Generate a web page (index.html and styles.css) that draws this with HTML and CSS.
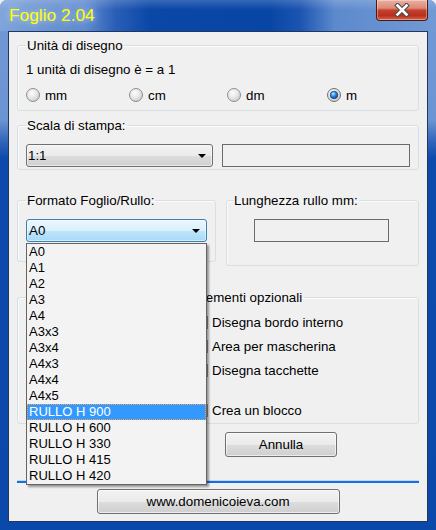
FILE: index.html
```html
<!DOCTYPE html>
<html lang="it">
<head>
<meta charset="utf-8">
<title>Foglio 2.04</title>
<link rel="stylesheet" href="styles.css">
</head>
<body>
<svg class="defs" width="0" height="0" aria-hidden="true">
  <defs>
    <radialGradient id="rbFill" cx="40%" cy="35%" r="70%">
      <stop offset="0" stop-color="#fdfdfd"/>
      <stop offset="0.55" stop-color="#e6e6e6"/>
      <stop offset="1" stop-color="#c9c9c9"/>
    </radialGradient>
    <radialGradient id="rbDot" cx="40%" cy="35%" r="70%">
      <stop offset="0" stop-color="#c6ecff"/>
      <stop offset="0.45" stop-color="#2b8be6"/>
      <stop offset="1" stop-color="#083f8c"/>
    </radialGradient>
  </defs>
</svg>
<div class="window">
  <div class="titlebar">
    <span class="title">Foglio 2.04</span>
    <div class="close">
      <svg width="16" height="14" viewBox="0 0 16 14">
        <path d="M3.5 2.5 L12.5 11.5 M12.5 2.5 L3.5 11.5" stroke="#4a4a4a" stroke-width="4.6" stroke-linecap="square" fill="none"/>
        <path d="M3.5 2.5 L12.5 11.5 M12.5 2.5 L3.5 11.5" stroke="#ffffff" stroke-width="2.6" stroke-linecap="square" fill="none"/>
      </svg>
    </div>
  </div>
  <div class="client">
    <fieldset class="group g-units">
      <legend>Unità di disegno</legend>
      <div class="line">1 unità di disegno è = a 1</div>
      <div class="radios">
        <label class="radio"><svg width="14" height="14" viewBox="0 0 14 14"><circle cx="7" cy="7" r="6.5" fill="url(#rbFill)" stroke="#8e8f8f"/></svg><span>mm</span></label>
        <label class="radio"><svg width="14" height="14" viewBox="0 0 14 14"><circle cx="7" cy="7" r="6.5" fill="url(#rbFill)" stroke="#8e8f8f"/></svg><span>cm</span></label>
        <label class="radio"><svg width="14" height="14" viewBox="0 0 14 14"><circle cx="7" cy="7" r="6.5" fill="url(#rbFill)" stroke="#8e8f8f"/></svg><span>dm</span></label>
        <label class="radio"><svg width="14" height="14" viewBox="0 0 14 14"><circle cx="7" cy="7" r="6.5" fill="url(#rbFill)" stroke="#6f7070"/><circle cx="7" cy="7" r="3.8" fill="url(#rbDot)" stroke="#173f73" stroke-width="0.7"/></svg><span>m</span></label>
      </div>
    </fieldset>

    <fieldset class="group g-scale">
      <legend>Scala di stampa:</legend>
      <div class="row">
        <div class="combo combo-gray"><span class="combo-text">1:1</span><i class="arrow"></i></div>
        <div class="textbox"></div>
      </div>
    </fieldset>

    <div class="pair">
      <fieldset class="group g-format">
        <legend>Formato Foglio/Rullo:</legend>
        <div class="combo-wrap">
          <div class="combo combo-blue"><span class="combo-text">A0</span><i class="arrow"></i></div>
          <ul class="droplist">
            <li>A0</li>
            <li>A1</li>
            <li>A2</li>
            <li>A3</li>
            <li>A4</li>
            <li>A3x3</li>
            <li>A3x4</li>
            <li>A4x3</li>
            <li>A4x4</li>
            <li>A4x5</li>
            <li class="selected">RULLO H 900</li>
            <li>RULLO H 600</li>
            <li>RULLO H 330</li>
            <li>RULLO H 415</li>
            <li>RULLO H 420</li>
          </ul>
        </div>
      </fieldset>
      <fieldset class="group g-length">
        <legend>Lunghezza rullo mm:</legend>
        <div class="textbox tb-length"></div>
      </fieldset>
    </div>

    <fieldset class="group g-options">
      <legend>Elementi opzionali</legend>
      <div class="check"><span class="box"></span><span>Disegna bordo interno</span></div>
      <div class="check"><span class="box"></span><span>Area per mascherina</span></div>
      <div class="check"><span class="box"></span><span>Disegna tacchette</span></div>
      <div class="check check-last"><span class="box"></span><span>Crea un blocco</span></div>
    </fieldset>

    <div class="actions"><button class="btn btn-cancel">Annulla</button></div>
    <div class="progress"></div>
    <div class="footer"><button class="btn btn-site">www.domenicoieva.com</button></div>
  </div>
</div>
</body>
</html>
```

FILE: styles.css
```css
* { box-sizing: border-box; }

html, body {
  margin: 0;
  padding: 0;
}

body {
  width: 436px;
  height: 530px;
  overflow: hidden;
  background: #eef2f6;
  font-family: "Liberation Sans", Arial, sans-serif;
  font-size: 13.33px;
  line-height: 15px;
  color: #000;
}

.defs {
  display: block;
  width: 0;
  height: 0;
  overflow: hidden;
}

.window {
  width: 436px;
  height: 530px;
  display: flex;
  flex-direction: column;
  border-radius: 7px 7px 0 0;
  overflow: hidden;
  background: linear-gradient(to bottom, #7199d5 0px, #6b94d2 120px, #3a6bbd 138px, #0c4bab 158px, #0a49aa 100%);
}

.titlebar {
  height: 31px;
  flex: none;
  display: flex;
  justify-content: space-between;
  align-items: flex-start;
  background:
    linear-gradient(to bottom, rgba(255,255,255,0.18) 0px, rgba(255,255,255,0) 10px),
    linear-gradient(to right, #80a5db 0px, #6f97d3 35px, #5f8bcf 85px, #2b5fb7 115px, #0a47a6 150px, #0846a6 270px, #1c54b0 300px, #5d8acd 335px, #7199d5 436px);
}

.title {
  padding: 5px 0 0 9px;
  font-size: 17.33px;
  line-height: 20px;
  color: #ffff00;
  text-shadow: 0 0 6px rgba(210, 230, 255, 0.75), 0 0 14px rgba(210, 230, 255, 0.45);
}

.close {
  width: 52px;
  height: 21px;
  margin-right: 8px;
  display: flex;
  align-items: center;
  justify-content: center;
  border: 1px solid #4d1a12;
  border-top: none;
  border-radius: 0 0 4px 4px;
  background: linear-gradient(to bottom, #eab0a2 0%, #dc8a75 40%, #c3402c 52%, #b9301d 78%, #d76646 100%);
  box-shadow: inset 0 0 0 1px rgba(255, 255, 255, 0.35);
}

.client {
  flex: 1;
  margin: 0 8px 8px;
  padding: 0 8px;
  background: #f0f0f0;
  border: 1px solid #21375f;
  display: flex;
  flex-direction: column;
}

/* group boxes */
.group {
  margin: 0;
  min-width: 0;
  border: 1px solid #d5dfe5;
  border-radius: 3px;
  padding: 9px 8px 7px;
  box-shadow: inset 1px 1px 0 #fbfbfb;
}

.group legend {
  padding: 0 1px;
  line-height: 15px;
}

.g-units { margin-top: 6px; }

.line { height: 15px; }

.radios {
  margin-top: 10px;
  height: 16px;
  display: grid;
  grid-template-columns: 103px 98px 100px auto;
}

.radio {
  display: flex;
  align-items: center;
  gap: 5px;
}

.radio svg { display: block; flex: none; }

.g-scale {
  margin-top: 7px;
  padding: 11px 8px 2px;
}

.row {
  display: flex;
  gap: 9px;
}

.combo {
  height: 23px;
  border-radius: 3px;
  display: flex;
  align-items: center;
  justify-content: space-between;
  padding: 0 6px 0 2px;
}

.combo-gray {
  width: 187px;
  padding-left: 1px;
  border: 1px solid #707070;
  background: linear-gradient(to bottom, #f2f2f2 0%, #ebebeb 50%, #dddddd 51%, #cfcfcf 100%);
  box-shadow: inset 0 0 0 1px rgba(255, 255, 255, 0.55);
}

.combo-blue {
  width: 181px;
  border: 1px solid #3c7fb1;
  background: linear-gradient(to bottom, #eaf6fd 0%, #d9f0fc 50%, #bee6fd 51%, #a7d9f5 100%);
  box-shadow: inset 0 0 0 1px rgba(255, 255, 255, 0.5);
}

.arrow {
  width: 0;
  height: 0;
  border-left: 4px solid transparent;
  border-right: 4px solid transparent;
  border-top: 4px solid #000;
}

.textbox {
  height: 23px;
  flex: 1;
  border: 1px solid #6b6b6b;
  background: #f0f0f0;
}

.pair {
  margin-top: 23px;
  display: flex;
  align-items: flex-start;
  gap: 10px;
}

.g-format {
  width: 199px;
  flex: none;
  padding: 11px 8px 19px;
}

.g-length {
  flex: 1;
  padding: 11px 8px 23px 7px;
}

.g-length legend { padding-left: 0; }

.tb-length {
  flex: none;
  width: 135px;
  margin-left: 20px;
}

.combo-wrap { position: relative; }

.droplist {
  position: absolute;
  left: 0;
  top: 24px;
  z-index: 5;
  width: 181px;
  margin: 0;
  padding: 0;
  list-style: none;
  background: #f3f3f3;
  border: 1px solid #646464;
  box-shadow: 2px 2px 2px rgba(0, 0, 0, 0.38);
  font-size: 13px;
}

.droplist li {
  height: 16px;
  line-height: 16px;
  padding-left: 2px;
  white-space: nowrap;
}

.droplist li.selected {
  background: #3399ff;
  color: #fff;
  outline: 1px dotted #f0a050;
  outline-offset: -1px;
}

.g-options {
  margin-top: 24px;
  padding: 10px 8px 5px;
}

.g-options legend { padding: 0 2px 0 168px; }

.check {
  height: 15px;
  margin: 9px 0 0 169px;
  display: flex;
  align-items: center;
  gap: 4px;
}

.check:first-of-type { margin-top: 0; }

.check-last { margin-top: 25px; }

.box {
  width: 13px;
  height: 13px;
  flex: none;
  border: 1px solid #8e8f8f;
  background: linear-gradient(135deg, #dcdcdc, #fbfbfb);
}

.btn {
  height: 25px;
  padding: 0;
  border: 1px solid #707070;
  border-radius: 3px;
  background: linear-gradient(to bottom, #f2f2f2 0%, #ebebeb 50%, #dddddd 51%, #cfcfcf 100%);
  box-shadow: inset 0 0 0 1px rgba(255, 255, 255, 0.6);
  font-family: inherit;
  font-size: 13.33px;
  color: #000;
}

.actions {
  margin-top: 8px;
  display: flex;
}

.btn-cancel {
  width: 112px;
  margin-left: 208px;
}

.progress {
  margin-top: 23px;
  height: 3px;
  border-top: 1px solid #c2d6ee;
  background: #1470e0;
}

.footer {
  margin-top: 6px;
  display: flex;
  justify-content: center;
}

.btn-site { width: 243px; }
```
